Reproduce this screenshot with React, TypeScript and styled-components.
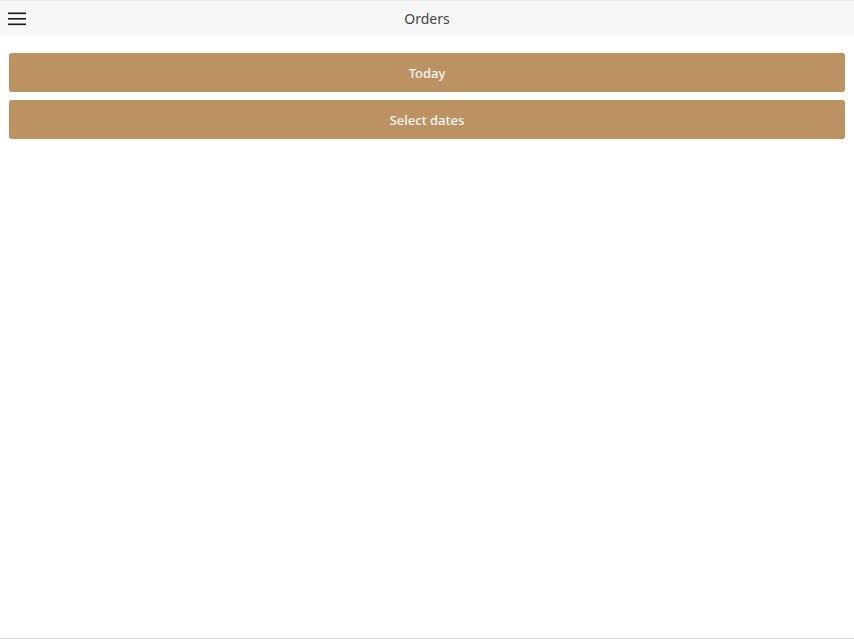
import styled, { createGlobalStyle } from 'styled-components';

const GlobalStyle = createGlobalStyle`
  html, body {
    margin: 0;
    padding: 0;
    background: #ffffff;
  }
  body {
    font-family: "Noto Sans", "Open Sans", "Liberation Sans", sans-serif;
  }
`;

const Page = styled.div`
  display: flex;
  flex-direction: column;
  height: 638px;
  border-bottom: 1px solid #dddddd;
`;

const TopBar = styled.header`
  position: relative;
  display: flex;
  align-items: center;
  justify-content: center;
  height: 36px;
  background: #f7f7f7;
  border-top: 1px solid #e8e8e8;
  box-sizing: border-box;
`;

const MenuButton = styled.button`
  position: absolute;
  left: 8px;
  top: 50%;
  transform: translateY(-50%);
  display: flex;
  padding: 0;
  border: none;
  background: transparent;
  cursor: pointer;
`;

const Title = styled.h1`
  margin: 0;
  font-size: 14px;
  font-weight: 400;
  color: #444444;
`;

const Actions = styled.div`
  display: flex;
  flex-direction: column;
  gap: 8px;
  padding: 17px 9px 0;
`;

const ActionButton = styled.button`
  height: 39px;
  border: none;
  border-radius: 3px;
  background: #bc9262;
  color: #fdf7ef;
  font-family: inherit;
  font-size: 13px;
  font-weight: 500;
  cursor: pointer;
`;

function MenuIcon() {
  return (
    <svg width="18" height="14" viewBox="0 0 18 14">
      <rect x="0" y="0.5" width="18" height="1.6" fill="#1a1a1a" />
      <rect x="0" y="6" width="18" height="1.6" fill="#1a1a1a" />
      <rect x="0" y="11.5" width="18" height="1.6" fill="#1a1a1a" />
    </svg>
  );
}

export default function App() {
  return (
    <>
      <GlobalStyle />
      <Page>
        <TopBar>
          <MenuButton aria-label="Menu">
            <MenuIcon />
          </MenuButton>
          <Title>Orders</Title>
        </TopBar>
        <Actions>
          <ActionButton>Today</ActionButton>
          <ActionButton>Select dates</ActionButton>
        </Actions>
      </Page>
    </>
  );
}
